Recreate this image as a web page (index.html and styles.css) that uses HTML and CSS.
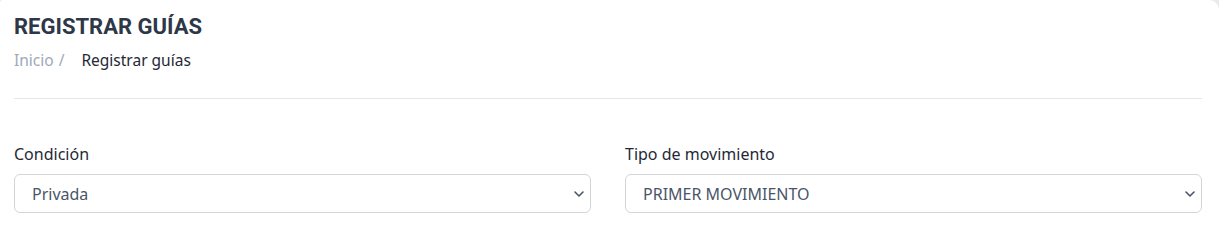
FILE: index.html
```html
<!DOCTYPE html>
<html lang="es">
<head>
<meta charset="utf-8">
<title>Registrar guías</title>
<link rel="stylesheet" href="styles.css">
</head>
<body>
<main class="card">
  <header class="page-header">
    <h1 class="page-title">REGISTRAR GUÍAS</h1>
    <nav class="breadcrumb">
      <span class="crumb-link">Inicio</span>
      <span class="crumb-sep">/</span>
      <span class="crumb-current">Registrar guías</span>
    </nav>
  </header>
  <hr class="divider">
  <form class="form-grid">
    <div class="field">
      <label class="field-label">Condición</label>
      <div class="select">
        <span class="select-value">Privada</span>
        <svg class="chevron" viewBox="0 0 10 6" width="10" height="6"><path d="M1 1l4 4 4-4" fill="none" stroke="#4a5568" stroke-width="1.6" stroke-linecap="round" stroke-linejoin="round"/></svg>
      </div>
    </div>
    <div class="field">
      <label class="field-label">Tipo de movimiento</label>
      <div class="select">
        <span class="select-value">PRIMER MOVIMIENTO</span>
        <svg class="chevron" viewBox="0 0 10 6" width="10" height="6"><path d="M1 1l4 4 4-4" fill="none" stroke="#4a5568" stroke-width="1.6" stroke-linecap="round" stroke-linejoin="round"/></svg>
      </div>
    </div>
  </form>
</main>
</body>
</html>
```
FILE: styles.css
```css
html, body {
  margin: 0;
  padding: 0;
  background: #e9ebee;
  overflow: hidden;
}
body {
  font-family: "Noto Sans", "Open Sans", sans-serif;
  -webkit-font-smoothing: antialiased;
}
.card {
  background: #ffffff;
  height: 100vh;
  box-sizing: border-box;
  border-radius: 3px 10px 0 0;
  padding: 14px 17px 0 14px;
}
.page-title {
  margin: 0;
  font-family: Roboto, "Noto Sans", sans-serif;
  font-weight: 700;
  font-size: 22px;
  line-height: 26px;
  color: #2d3748;
}
.breadcrumb {
  display: flex;
  align-items: baseline;
  margin-top: 9px;
  font-size: 15.5px;
  line-height: 22px;
}
.crumb-link { color: #9ea9b8; }
.crumb-sep { color: #9ea9b8; margin-left: 5px; margin-right: 17px; }
.crumb-current { color: #1f2937; }
.divider {
  border: 0;
  border-top: 1px solid #e4e6e9;
  margin: 27px 0 0 0;
}
.form-grid {
  display: grid;
  grid-template-columns: 1fr 1fr;
  column-gap: 34px;
  margin-top: 43px;
}
.field {
  display: flex;
  flex-direction: column;
}
.field-label {
  font-size: 16px;
  line-height: 24px;
  color: #1f2937;
  margin-bottom: 8px;
}
.select {
  height: 39px;
  box-sizing: border-box;
  border: 1px solid #d1d5db;
  border-radius: 6px;
  display: flex;
  align-items: center;
  justify-content: space-between;
  padding: 0 6px 0 17px;
  background: #fff;
}
.select-value {
  font-size: 16px;
  color: #4a5568;
}
.chevron {
  display: block;
}
```
